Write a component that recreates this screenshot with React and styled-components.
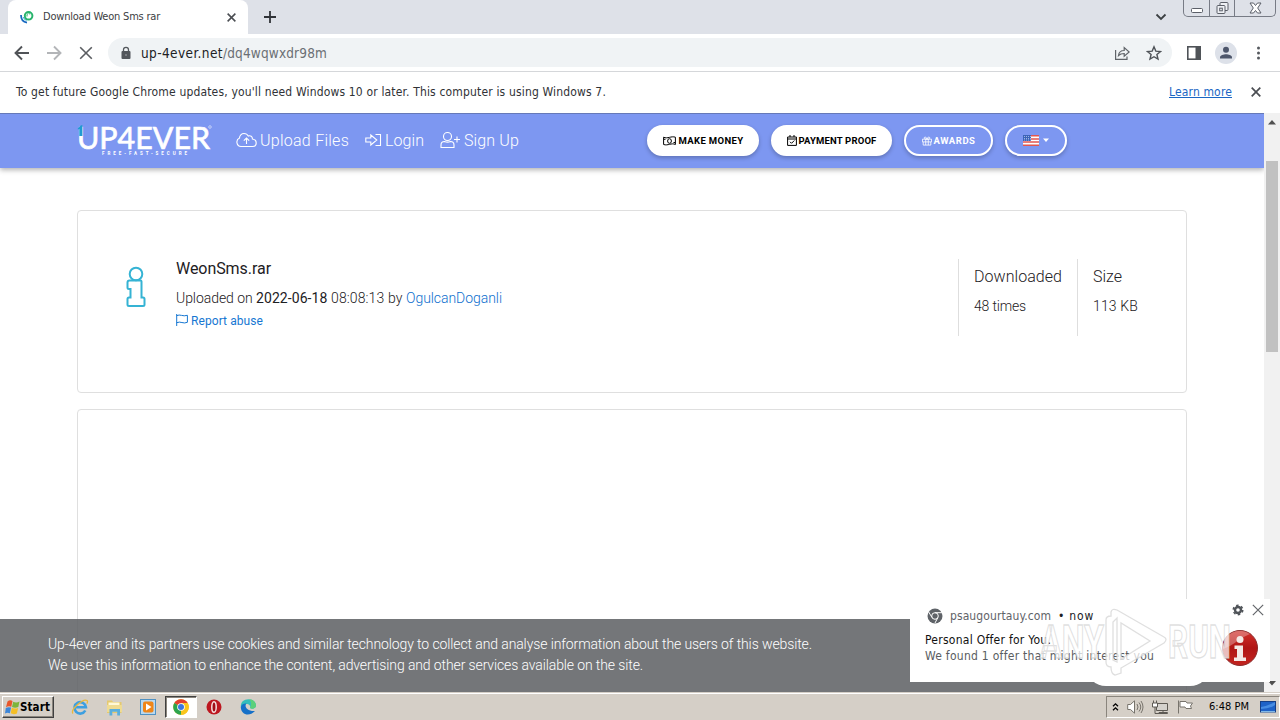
import React, { useLayoutEffect, useRef, useState } from "react";
import styled, { createGlobalStyle } from "styled-components";

const ui = `"DejaVu Sans Condensed", "DejaVu Sans", "Noto Sans", sans-serif`;
const web = `Roboto, "Liberation Sans", sans-serif`;

const Global = createGlobalStyle`
  * { box-sizing: border-box; }
  body { margin: 0; overflow: hidden; background: #fff; }
`;

const Screen = styled.div`
  position: relative;
  width: 1280px;
  height: 720px;
  display: flex;
  flex-direction: column;
  overflow: hidden;
  font-family: ${ui};
  svg { display: block; flex: none; }
`;

const Label = styled.span`
  display: block;
  flex: none;
  white-space: nowrap;
  width: ${(p) => p.$w}px;
  font-family: ${(p) => (p.$web ? web : ui)};
  font-size: ${(p) => p.$size || 12}px;
  font-weight: ${(p) => p.$weight || 400};
  line-height: ${(p) => p.$lh || 16}px;
  color: ${(p) => p.$color || "inherit"};
  text-decoration: ${(p) => (p.$underline ? "underline" : "none")};
`;

// A label whose tracking is adjusted so that the text fills its width.
function Fit({ children, ...rest }) {
  const ref = useRef(null);
  const [spacing, setSpacing] = useState(0);
  useLayoutEffect(() => {
    const el = ref.current;
    const natural = el.getBoundingClientRect().width;
    setSpacing((rest.$w - natural) / el.textContent.length);
  }, []);
  return (
    <Label {...rest}>
      <span ref={ref} style={{ letterSpacing: spacing }}>{children}</span>
    </Label>
  );
}

/* ---------- browser frame ---------- */
const TabStrip = styled.div`
  height: 34px;
  flex: none;
  display: flex;
  background: #dee1e8;
`;
const Tab = styled.div`
  width: 240px;
  margin-left: 8px;
  padding: 0 12px 0 12px;
  display: flex;
  align-items: center;
  background: #fff;
  border-radius: 8px 8px 0 0;
  color: #3c4043;
`;
const TabTitle = styled.div`
  flex: 1;
  padding-left: 9px;
`;
const NewTab = styled.div`
  padding: 11px 0 0 16px;
  flex: 1;
`;
const TabSearch = styled.div`
  padding: 13px 16px 0 0;
`;
const WindowButtons = styled.div`
  display: flex;
  width: 93px;
  height: 17px;
  margin-right: 4px;
  border: 1px solid #777b85;
  border-top: 0;
  border-radius: 0 0 5px 5px;
`;
const WindowButton = styled.div`
  width: ${(p) => p.$w}px;
  display: flex;
  align-items: center;
  justify-content: center;
  border-left: ${(p) => (p.$first ? 0 : "1px solid #777b85")};
`;
const Toolbar = styled.div`
  height: 38px;
  flex: none;
  display: flex;
  align-items: center;
  background: #fff;
  border-bottom: 1px solid #d5d7da;
  padding: 0 9px 0 14px;
`;
const NavButtons = styled.div`
  display: flex;
  gap: 16px;
  width: 94px;
`;
const Omnibox = styled.div`
  width: 1064px;
  flex: none;
  height: 29px;
  display: flex;
  align-items: center;
  border-radius: 15px;
  background: #f0f3f5;
  padding: 0 10px 0 12px;
`;
const Address = styled.div`
  display: flex;
  flex: 1;
  padding-left: 9px;
`;
const OmniActions = styled.div`
  display: flex;
  gap: 16px;
`;
const ToolbarActions = styled.div`
  display: flex;
  align-items: center;
  gap: 10px;
  margin-left: 15px;
`;
const AvatarSlot = styled.div`
  padding-left: 4px;
`;
const InfoBar = styled.div`
  height: 41px;
  flex: none;
  display: flex;
  align-items: center;
  justify-content: space-between;
  padding: 0 19px 2px 16px;
  background: #fff;
  color: #303236;
`;
const InfoActions = styled.div`
  display: flex;
  align-items: center;
  gap: 19px;
`;

/* ---------- page ---------- */
const Viewport = styled.div`
  position: relative;
  height: 579px;
  flex: none;
  display: flex;
  overflow: hidden;
`;
const Page = styled.div`
  position: relative;
  width: 1264px;
  height: 579px;
  overflow: hidden;
  background: #fff;
`;
const Header = styled.div`
  height: 55px;
  display: flex;
  padding-left: 77px;
  background: #7d97f1;
  box-shadow: inset 0 1px 0 #6679b8, 0 2px 5px rgba(0, 0, 0, 0.3);
`;
const Brand = styled.div`
  width: 159px;
  padding-top: 7px;
`;
const NavLinks = styled.div`
  width: 411px;
  display: flex;
  gap: 16px;
  padding-top: 18px;
  color: #fff;
`;
const NavLink = styled.div`
  display: flex;
  gap: ${(p) => p.$gap || 3}px;
`;
const Pills = styled.div`
  display: flex;
  gap: 12px;
  padding-top: 12px;
`;
const Pill = styled.div`
  width: ${(p) => p.$w}px;
  height: 31px;
  display: flex;
  align-items: center;
  justify-content: center;
  gap: ${(p) => p.$gap || 2}px;
  border-radius: 16px;
  border: 2px solid #fff;
  background: ${(p) => (p.$outline ? "transparent" : "#fff")};
  color: ${(p) => (p.$outline ? "#fff" : "#000")};
  box-shadow: 0 2px 4px rgba(0, 0, 0, 0.24);
`;
const Content = styled.main`
  width: 1110px;
  margin: 42px auto 0;
  display: flex;
  flex-direction: column;
  gap: 16px;
`;
const Card = styled.section`
  height: ${(p) => p.$h}px;
  display: flex;
  align-items: flex-start;
  padding: 48px 32px 0 48px;
  border: 1px solid #dfdfdf;
  border-radius: 4px;
  color: #1d2023;
`;
const FileIcon = styled.div`
  width: 50px;
  padding-top: 7px;
`;
const FileInfo = styled.div`
  flex: 1;
`;
const FileName = styled.div`
  padding-bottom: 11px;
`;
const FileLine = styled.div`
  display: flex;
  padding-bottom: 6px;
`;
const Report = styled.div`
  display: flex;
  gap: 3px;
  color: #1677d2;
`;
const Stat = styled.div`
  height: 77px;
  width: ${(p) => p.$w}px;
  padding: 7px 0 0 15px;
  border-left: 1px solid #dedede;
`;
const StatValue = styled.div`
  padding-top: 7px;
`;
const CookieBar = styled.div`
  position: absolute;
  left: 0;
  right: 0;
  bottom: 0;
  height: 73px;
  padding: 15px 48px;
  background: rgba(93, 96, 99, 0.86);
  color: #fff;
`;
const CookieButton = styled.div`
  position: absolute;
  left: 1086px;
  bottom: 6px;
  width: 124px;
  height: 40px;
  border-radius: 20px;
  background: #fff;
`;
const Scrollbar = styled.div`
  width: 16px;
  display: flex;
  flex-direction: column;
  align-items: center;
  background: #f1f1f1;
  padding: 7px 0 6px;
`;
const Thumb = styled.div`
  width: 12px;
  height: 191px;
  margin: 36px 0 auto;
  background: #c1c1c1;
`;

/* ---------- notification ---------- */
const Toast = styled.div`
  position: absolute;
  left: 910px;
  top: 599px;
  width: 360px;
  height: 83px;
  background: #fff;
  display: flex;
`;
const ToastText = styled.div`
  width: 308px;
  padding: 9px 0 0 15px;
`;
const ToastSource = styled.div`
  display: flex;
  align-items: center;
  gap: 7px;
  padding: 0 0 9px 2px;
`;
const ToastSide = styled.div`
  padding-top: 5px;
`;
const ToastTools = styled.div`
  display: flex;
  gap: 8px;
  padding: 0 0 13px 14px;
`;
const ToastIcon = styled.div`
  margin-left: 3px;
`;
const Watermark = styled.svg`
  position: absolute;
  left: 1036px;
  top: 604px;
`;

/* ---------- taskbar ---------- */
const Taskbar = styled.div`
  height: 28px;
  flex: none;
  display: flex;
  align-items: flex-start;
  background: #d5cfc7;
  border-top: 1px solid #d5cfc7;
  box-shadow: inset 0 1px 0 #fff;
  padding: 3px 0 0 2px;
`;
const StartButton = styled.div`
  width: 52px;
  height: 22px;
  display: flex;
  align-items: center;
  padding-left: 2px;
  color: #000;
  border: 1px solid;
  border-color: #fff #404040 #404040 #fff;
  box-shadow: inset -1px -1px 0 #8a857d;
`;
const QuickLaunch = styled.div`
  display: flex;
  flex: 1;
  padding-left: 9px;
`;
const TaskItem = styled.div`
  width: ${(p) => (p.$active ? 32 : 34)}px;
  height: 22px;
  display: flex;
  align-items: center;
  justify-content: center;
  background: ${(p) => (p.$active ? "#fff" : "transparent")};
  border: ${(p) => (p.$active ? "1px solid" : "0")};
  border-color: #404040 #fff #fff #404040;
  box-shadow: ${(p) => (p.$active ? "inset 1px 1px 0 #8a857d" : "none")};
`;
const Tray = styled.div`
  width: 174px;
  height: 22px;
  display: flex;
  align-items: center;
  padding-left: 5px;
  border: 1px solid;
  border-color: #8a857d #fff #fff #8a857d;
  color: #000;
`;
const TrayIcons = styled.div`
  display: flex;
  align-items: center;
  gap: 8px;
  width: 97px;
`;
const Clock = styled.div`
  width: 51px;
`;

/* ---------- drawings ---------- */
const Cross = ({ size = 10, color = "#4a4d52", w = 1.6 }) => (
  <svg width={size} height={size} viewBox="0 0 10 10" stroke={color} strokeWidth={w}>
    <path d="M.7 .7 9.3 9.3M9.3 .7 .7 9.3" />
  </svg>
);
const Favicon = () => (
  <svg width="14" height="14" viewBox="0 0 14 14" fill="none">
    <path d="M1 5c0 4 2 7 6 7.600" stroke="#1769c0" strokeWidth="1.800" />
    <path d="M3.500 7c.3 2 1.500 3 3 3.500" stroke="#3aa7d8" strokeWidth="1.200" />
    <circle cx="8.600" cy="5.800" r="3.800" stroke="#27b46c" strokeWidth="2" />
    <path d="M7 6.500V4.500l1.600-1.500 1.600 1.500" stroke="#27b46c" strokeWidth="1" />
  </svg>
);
const Arrow = ({ color, flip }) => (
  <svg width="16" height="16" viewBox="0 0 16 16" fill="none" stroke={color} strokeWidth="1.900">
    <path d={flip ? "M1 8h13M8 1.500 14.500 8 8 14.500" : "M15 8H2M8 1.500 1.500 8 8 14.500"} />
  </svg>
);
const Lock = () => (
  <svg width="12" height="14" viewBox="0 0 12 14" fill="none">
    <rect x="1.500" y="5" width="9" height="8" rx="1" fill="#53575c" />
    <path d="M3.500 5.500V3.800a2.500 2.500 0 0 1 5 0v1.700" stroke="#53575c" strokeWidth="1.300" />
    <circle cx="6" cy="9" r=".9" fill="#8e9195" />
  </svg>
);
const Share = () => (
  <svg width="16" height="16" viewBox="0 0 16 16" fill="none" stroke="#5f6368" strokeWidth="1.200">
    <path d="M1.600 5v9.400H13v-3M4.500 10.500c.4-3.300 2.300-5 5.700-5V2.600l5 4.400-5 4.200V8.500c-2.700 0-4.300.6-5.700 2Z" />
  </svg>
);
const Star = () => (
  <svg width="16" height="16" viewBox="0 0 16 16" fill="none" stroke="#4f5358" strokeWidth="1.400">
    <path d="m8 1.800 1.800 4.300 4.700.4-3.600 3 1.100 4.600L8 11.700l-4 2.400 1.100-4.600-3.600-3 4.700-.4Z" />
  </svg>
);
const SidePanel = () => (
  <svg width="14" height="14" viewBox="0 0 14 14">
    <rect x=".8" y=".8" width="12.400" height="12.400" fill="#fff" stroke="#4f5358" strokeWidth="1.600" />
    <path d="M8.500 0H14v14H8.500Z" fill="#4f5358" />
  </svg>
);
const Avatar = () => (
  <svg width="22" height="22" viewBox="0 0 22 22">
    <circle cx="11" cy="11" r="11" fill="#dde1e9" />
    <circle cx="11" cy="7.800" r="3" fill="#4d566b" />
    <path d="M5 16.500v-1.300c0-2 3.600-3 6-3s6 1 6 3v1.300Z" fill="#4d566b" />
  </svg>
);
const Dots = () => (
  <svg width="22" height="14" viewBox="0 0 22 14" fill="#55595e">
    <circle cx="11.500" cy="2" r="1.500" /><circle cx="11.500" cy="7" r="1.500" /><circle cx="11.500" cy="12" r="1.500" />
  </svg>
);
const Logo = () => (
  <svg width="136" height="37" viewBox="0 0 136 37">
    <text x="0" y="29" fill="#fff" stroke="#fff" strokeWidth=".7" fontFamily="Lato, sans-serif" fontSize="31.500" textLength="133" lengthAdjust="spacingAndGlyphs">UP4EVER</text>
    <path d="M.8 8.500 4 5.200H5.400V16H2.300V9L.8 9.600Z" fill="#209bd1" />
    <circle cx="133" cy="7" r="1.300" fill="none" stroke="#fff" strokeWidth=".5" />
    <text x="25" y="34.500" fill="#fff" fontFamily="Roboto, sans-serif" fontWeight="700" fontSize="4.500" textLength="85">FREE-FAST-SECURE</text>
  </svg>
);
const Cloud = () => (
  <svg width="21" height="18" viewBox="0 0 21 18" fill="none" stroke="#fff" strokeWidth="1.100">
    <path d="M5 15.500a4.400 4.400 0 0 1-1.500-8.400C3.500 4.400 5.500 2.500 8 2.500c2 0 3.500 1 4.300 2.600 2-1 4.300.3 4.100 2.900 5.200.8 4.900 7.500.2 7.500ZM10.500 13V7M7.800 9.700 10.500 7l2.700 2.700" />
  </svg>
);
const LoginIcon = () => (
  <svg width="17" height="18" viewBox="0 0 17 18" fill="none" stroke="#fff" strokeWidth="1.100">
    <path d="M10.500 3.500h5v11h-5M.8 7v4h5v3l6-5-6-5v3Z" />
  </svg>
);
const UserAdd = () => (
  <svg width="21" height="18" viewBox="0 0 21 18" fill="none" stroke="#fff" strokeWidth="1.100">
    <circle cx="7.500" cy="5.500" r="4" />
    <path d="M1 16.500V14c0-2.200 1.500-3.500 3.500-3.500 2 .8 4 .8 6 0 2 0 3.500 1.300 3.500 3.500v2.500ZM14 8.500h6M17 5.500v6" />
  </svg>
);
const Money = () => (
  <svg width="13" height="10" viewBox="0 0 13 10" fill="none" stroke="#000">
    <path d="M.6 1.200c4 2 7.500-1.500 11.800 0v7.300c-4-2-7.500 1.500-11.800 0Z" /><ellipse cx="6.500" cy="5" rx="1.900" ry="2.300" /><path d="M1 3.300h1.500M10.500 6.500H12" />
  </svg>
);
const Calendar = () => (
  <svg width="10" height="11" viewBox="0 0 10 11" fill="none" stroke="#000">
    <path d="M.6 2h8.800v8.400H.6ZM.6 4h8.800M3 0v2M7 0v2M3 6.800l1.500 1.500L7.300 5.500" />
  </svg>
);
const Gift = () => (
  <svg width="10" height="10" viewBox="0 0 11 10" fill="none" stroke="#fff" strokeWidth=".9">
    <path d="M.5 3h10v3H.5ZM1.300 6v3.500h8.400V6M4.100 3v6.500M6.900 3v6.500M5.500 3C3 3 2 2.200 2.500 1.200 3.500 0 5 .8 5.500 3 6 .8 7.500 0 8.500 1.200 9 2.200 8 3 5.500 3Z" />
  </svg>
);
const UsFlag = () => (
  <svg width="16" height="11" viewBox="0 0 16 11">
    <path d="M0 0h16v11H0Z" fill="#fff" />
    <path d="M0 .8h16M0 3.900h16M0 7h16M0 10.200h16" stroke="#e2564f" strokeWidth="1.500" />
    <path d="M0 0h8v6H0Z" fill="#3c64b8" />
    <path d="M1 1.500h7M1 3.500h7M1 5h7" stroke="#c9d6f2" strokeWidth=".7" strokeDasharray="1 1" />
  </svg>
);
const InfoGlyph = () => (
  <svg width="20" height="42" viewBox="0 0 20 42" fill="none" stroke="#35b3d4" strokeWidth="2">
    <circle cx="10" cy="8" r="6.300" />
    <path d="M3.500 14.500H14.500q1 0 1 1V31.500H17q1.500 0 1.500 1.500v5.500q0 1.500-1.500 1.500H3q-1.500 0-1.500-1.500V33q0-1.500 1.500-1.500h1.500V23H3q-1.500 0-1.500-1.500V16.500q0-2 2-2Z" />
  </svg>
);
const FlagOutline = () => (
  <svg width="12" height="12" viewBox="0 0 12 12" fill="none" stroke="#1677d2">
    <path d="M.7 0v12M.7 1.700c3.300-2 6 1.300 10.700-.4v7c-4 2-7-1.500-10.700.4" />
  </svg>
);
const ChromeGray = () => (
  <svg width="16" height="16" viewBox="0 0 16 16" fill="none">
    <circle cx="8" cy="8" r="7.500" fill="#5f6368" />
    <circle cx="8" cy="8" r="3.300" stroke="#fff" />
    <path d="M8 4.700h7M5 9.500 1.700 4M10.800 9.700 8 15" stroke="#fff" />
  </svg>
);
const Gear = () => (
  <svg width="12" height="12" viewBox="0 0 12 12" fill="none">
    <circle cx="6" cy="6" r="3" stroke="#505459" strokeWidth="2.400" />
    <circle cx="6" cy="6" r="4.700" stroke="#505459" strokeWidth="1.600" strokeDasharray="2.460 2.460" />
  </svg>
);
const RedInfo = () => (
  <svg width="38" height="38" viewBox="0 0 38 38">
    <defs>
      <linearGradient id="red" x2="0" y2="1"><stop stopColor="#d3302b" /><stop offset=".5" stopColor="#b01414" /><stop offset="1" stopColor="#c3241f" /></linearGradient>
    </defs>
    <circle cx="19" cy="19" r="17.500" fill="url(#red)" stroke="#8b2a2a" />
    <path d="M2 20A17 17 0 0 1 29 5C18 9 14 16 2 20Z" fill="#fff" opacity=".3" />
    <circle cx="19" cy="10.500" r="3.500" fill="#f4e9e6" />
    <path d="M13.500 16.500h8.500v12h3v3.500H13v-3.500h3V20h-2.500Z" fill="#f4e9e6" />
  </svg>
);
const WinFlag = () => (
  <svg width="15" height="15" viewBox="0 0 15 15">
    <path d="M2.500 1.500q2.500-2 5-.5L6.300 6.800q-2.800-1.200-5.300.5Z" fill="#e8562a" />
    <path d="M8.200 1.700q3 1.600 6.300-.2L13.300 7q-3.300 1.500-6.300-.1Z" fill="#7db43a" />
    <path d="M.8 8q2.500-1.400 5.300-.4L4.900 13.200q-2.700-1-4.900.2Z" fill="#3d86d8" />
    <path d="M6.800 7.800q3 1.500 6.300.2l-1.200 5.400q-3.200 1.500-6.200-.1Z" fill="#f5bf26" />
  </svg>
);
const IeIcon = () => (
  <svg width="18" height="18" viewBox="0 0 18 18" fill="none">
    <path d="M14.300 12.500a5.700 5.700 0 1 1 .6-3.300H5" stroke="#3d9fe0" strokeWidth="2.600" />
    <path d="M2 15.500C-1 12 12 0 16 2.500c.7.600.5 2-.2 3.200" stroke="#e9b83c" strokeWidth="1.300" />
  </svg>
);
const FolderIcon = () => (
  <svg width="17" height="17" viewBox="0 0 17 17">
    <path d="M1 1.500h5l1 1.500h8.500V14H1Z" fill="#e5c96f" /><path d="M2.500 3.500h11v3H2.500Z" fill="#fff8d8" />
    <path d="M1 6h15v7H1Z" fill="#efdb92" /><path d="M3.500 16.500V10h10.500v6.500h-2.800v-3.700H6.300v3.700Z" fill="#5aaede" />
  </svg>
);
const MediaIcon = () => (
  <svg width="16" height="16" viewBox="0 0 16 16">
    <rect x=".5" y=".5" width="15" height="15" fill="#b9d9f0" stroke="#4f91c2" />
    <rect x="3" y="2.500" width="10.500" height="11" rx="2" fill="#ef8619" />
    <path d="M6 4.500 11.500 8 6 11.500Z" fill="#fff" />
  </svg>
);
const ChromeIcon = () => (
  <svg width="16" height="16" viewBox="0 0 16 16">
    <circle cx="8" cy="8" r="7.800" fill="#f9c51c" />
    <path d="M8 8 1.250 4.100A7.800 7.800 0 0 1 14.750 4.100Z" fill="#e2402f" />
    <path d="M8 8 1.250 4.100A7.800 7.800 0 0 0 8 15.800l3.300-5.600Z" fill="#2da44e" />
    <path d="M8 8V4.100h6.800A7.800 7.800 0 0 1 8 15.800Z" fill="#f9c51c" />
    <circle cx="8" cy="8" r="3.800" fill="#fff" /><circle cx="8" cy="8" r="3" fill="#3b77e0" />
  </svg>
);
const OperaIcon = () => (
  <svg width="16" height="16" viewBox="0 0 16 16">
    <circle cx="8" cy="8" r="7.500" fill="#bd1720" />
    <ellipse cx="8" cy="8" rx="2.200" ry="5.300" fill="#a00d16" stroke="#f6e2e2" strokeWidth="1.500" />
  </svg>
);
const EdgeIcon = () => (
  <svg width="17" height="16" viewBox="0 0 17 16">
    <path d="M1 9C0 3 4 .3 8.500.3c5 0 7.500 3.500 7.500 6.200 0 3-4 4-6 2.500C11 7 9 5 6.500 5 4 5 1.500 6.500 1 9Z" fill="#35bdbb" />
    <path d="M9 .3c4.500 0 7 3.500 7 6.200 0 3-4 4-6 2.500C12 5 11 2 9 .3Z" fill="#5bd07a" />
    <path d="M.8 8C1.500 5 4.500 4 6.500 4.500 4 7 6.500 12.500 15 12 9 18.500 1 15.500.8 8Z" fill="#1670c8" />
  </svg>
);
const Chevrons = () => (
  <svg width="7" height="10" viewBox="0 0 7 10" fill="none" stroke="#000" strokeWidth="1.300">
    <path d="M1 4.300 3.500 1.800 6 4.300M1 8.300 3.500 5.800 6 8.300" />
  </svg>
);
const Speaker = () => (
  <svg width="17" height="14" viewBox="0 0 17 14" fill="#fff" stroke="#77736c">
    <path d="M.7 4.500h2.800L7.500.8v12.400L3.500 9.500H.7Z" /><path d="M10 4q2 3 0 6M12 2.500q3.500 4.500 0 9M14 1q4 6 0 12" fill="none" />
  </svg>
);
const Network = () => (
  <svg width="17" height="15" viewBox="0 0 17 15" stroke="#5e5a54">
    <path d="M4.500 3.500h11v7h-11ZM7 13.500h8.500v-1H7Z" fill="#d5d2cd" /><path d="M.5 3h5v4h-5Z" fill="#fff" /><path d="M1.500 3V.5M4.500 3V.5M3 7v6.500h4M11 10.500v2" fill="none" />
  </svg>
);
const TrayFlag = () => (
  <svg width="17" height="14" viewBox="0 0 17 14" fill="#fff" stroke="#77736c">
    <path d="M1.500.5v13M3 1.500h6l1 1.500h5.500l-2 3 1 2.500H9L8 7H3Z" />
  </svg>
);
const Desktop = () => (
  <svg width="16" height="12" viewBox="0 0 16 12">
    <rect x=".5" y=".5" width="15" height="10.500" fill="#1e62c7" stroke="#163f85" />
    <path d="M1 6q7-1 14-5v3q-5 4-14 4Z" fill="#58a0ee" opacity=".7" /><path d="M1 10.700h14" stroke="#9ad0f5" />
  </svg>
);
const Triangle = ({ down }) => (
  <svg width="8" height="5" viewBox="0 0 8 5"><path d={down ? "M0 0h8L4 4.500Z" : "M0 4.500h8L4 0Z"} fill="#505050" /></svg>
);

export default function App() {
  return (
    <Screen>
      <Global />
      <TabStrip>
        <Tab>
          <Favicon />
          <TabTitle><Fit $w={117} $size={11} $color="#3c4043">Download Weon Sms rar</Fit></TabTitle>
          <Cross size={9} w={1.7} />
        </Tab>
        <NewTab>
          <svg width="12" height="12" viewBox="0 0 12 12" stroke="#303338" strokeWidth="1.800"><path d="M6 0v12M0 6h12" /></svg>
        </NewTab>
        <TabSearch>
          <svg width="12" height="8" viewBox="0 0 12 8" fill="none" stroke="#3c4043" strokeWidth="1.800"><path d="M1.500 1.500 6 6l4.500-4.500" /></svg>
        </TabSearch>
        <WindowButtons>
          <WindowButton $w={25} $first>
            <svg width="12" height="16" viewBox="0 0 12 16" fill="#fff" stroke="#5b5f68"><rect x=".5" y="8.500" width="11" height="4" rx="1" /></svg>
          </WindowButton>
          <WindowButton $w={25}>
            <svg width="13" height="14" viewBox="0 0 13 14" fill="#eef0f4" stroke="#5b5f68"><rect x="4" y="1.500" width="8" height="8" rx="1" /><rect x="1" y="4.500" width="8" height="8" rx="1" /><rect x="3.700" y="7.200" width="2.600" height="2.600" /></svg>
          </WindowButton>
          <WindowButton $w={41}>
            <svg width="13" height="12" viewBox="0 0 13 12" fill="#fff" stroke="#5b5f68"><path d="M1 1h3.500l2 2.500 2-2.500H12L8.700 6 12 11H8.500l-2-2.500-2 2.500H1l3.300-5Z" /></svg>
          </WindowButton>
        </WindowButtons>
      </TabStrip>
      <Toolbar>
        <NavButtons>
          <Arrow color="#505357" />
          <Arrow color="#b3b5b8" flip />
          <svg width="16" height="16" viewBox="0 0 16 16" stroke="#5a5d61" strokeWidth="1.600"><path d="m2.200 2.200 11.600 11.600M13.800 2.200 2.200 13.800" /></svg>
        </NavButtons>
        <Omnibox>
          <Lock />
          <Address>
            <Fit $w={82} $size={13.5} $lh={18} $color="#202124">up-4ever.net</Fit>
            <Fit $w={104} $size={13.5} $lh={18} $color="#6b6f74">/dq4wqwxdr98m</Fit>
          </Address>
          <OmniActions><Share /><Star /></OmniActions>
        </Omnibox>
        <ToolbarActions>
          <SidePanel /><AvatarSlot><Avatar /></AvatarSlot><Dots />
        </ToolbarActions>
      </Toolbar>
      <InfoBar>
        <Fit $w={590} $size={12}>To get future Google Chrome updates, you'll need Windows 10 or later. This computer is using Windows 7.</Fit>
        <InfoActions>
          <Fit $w={63} $size={12} $color="#1a66c4" $underline>Learn more</Fit>
          <Cross size={10} w={1.7} />
        </InfoActions>
      </InfoBar>

      <Viewport>
        <Page>
          <Header>
            <Brand><Logo /></Brand>
            <NavLinks>
              <NavLink><Cloud /><Fit $web $weight={300} $w={89} $size={16} $lh={19}>Upload Files</Fit></NavLink>
              <NavLink><LoginIcon /><Fit $web $weight={300} $w={39} $size={16} $lh={19}>Login</Fit></NavLink>
              <NavLink><UserAdd /><Fit $web $weight={300} $w={55} $size={16} $lh={19}>Sign Up</Fit></NavLink>
            </NavLinks>
            <Pills>
              <Pill $w={112} $gap={3}><Money /><Fit $web $weight={700} $w={65} $size={9.5}>MAKE MONEY</Fit></Pill>
              <Pill $w={121}><Calendar /><Fit $web $weight={700} $w={78} $size={9.5}>PAYMENT PROOF</Fit></Pill>
              <Pill $w={89} $outline><Gift /><Fit $web $weight={700} $w={42} $size={9.5}>AWARDS</Fit></Pill>
              <Pill $w={62} $outline $gap={4}>
                <UsFlag />
                <svg width="6" height="6" viewBox="0 0 6 6"><path d="M0 .500h6L3 4Z" fill="#fff" /></svg>
              </Pill>
            </Pills>
          </Header>
          <Content>
            <Card $h={183}>
              <FileIcon><InfoGlyph /></FileIcon>
              <FileInfo>
                <FileName><Fit $web $w={95} $size={16} $lh={19}>WeonSms.rar</Fit></FileName>
                <FileLine>
                  <Fit $web $weight={300} $w={80} $size={14} $lh={19}>Uploaded on&nbsp;</Fit>
                  <Fit $web $w={75} $size={14} $lh={19}>2022-06-18&nbsp;</Fit>
                  <Fit $web $weight={300} $w={75} $size={14} $lh={19}>08:08:13 by&nbsp;</Fit>
                  <Fit $web $weight={300} $w={96} $size={14} $lh={19} $color="#0d6fce">OgulcanDoganli</Fit>
                </FileLine>
                <Report><FlagOutline /><Fit $web $w={72} $size={12} $lh={14}>Report abuse</Fit></Report>
              </FileInfo>
              <Stat $w={119}>
                <Fit $web $weight={300} $w={88} $size={16} $lh={22}>Downloaded</Fit>
                <StatValue><Fit $web $weight={300} $w={52} $size={14} $lh={22}>48 times</Fit></StatValue>
              </Stat>
              <Stat $w={77}>
                <Fit $web $weight={300} $w={29} $size={16} $lh={22}>Size</Fit>
                <StatValue><Fit $web $weight={300} $w={45} $size={14} $lh={22}>113 KB</Fit></StatValue>
              </Stat>
            </Card>
            <Card $h={400} />
          </Content>
          <CookieBar>
            <Fit $web $weight={300} $w={764} $size={14} $lh={21}>Up-4ever and its partners use cookies and similar technology to collect and analyse information about the users of this website.</Fit>
            <Fit $web $weight={300} $w={595} $size={14} $lh={21}>We use this information to enhance the content, advertising and other services available on the site.</Fit>
          </CookieBar>
          <CookieButton />
        </Page>
        <Scrollbar><Triangle /><Thumb /><Triangle down /></Scrollbar>
      </Viewport>

      <Taskbar>
        <StartButton><WinFlag /><Fit $w={30} $size={11.5} $weight={700}>Start</Fit></StartButton>
        <QuickLaunch>
          <TaskItem><IeIcon /></TaskItem>
          <TaskItem><FolderIcon /></TaskItem>
          <TaskItem><MediaIcon /></TaskItem>
          <TaskItem $active><ChromeIcon /></TaskItem>
          <TaskItem><OperaIcon /></TaskItem>
          <TaskItem><EdgeIcon /></TaskItem>
        </QuickLaunch>
        <Tray>
          <TrayIcons><Chevrons /><Speaker /><Network /><TrayFlag /></TrayIcons>
          <Clock><Fit $w={40} $size={11}>6:48 PM</Fit></Clock>
          <Desktop />
        </Tray>
      </Taskbar>

      <Toast>
        <ToastText>
          <ToastSource>
            <ChromeGray />
            <Fit $w={101} $size={12} $color="#5f6368">psaugourtauy.com</Fit>
            <Fit $w={36} $size={12} $color="#202124">• now</Fit>
          </ToastSource>
          <Fit $w={126} $size={12} $lh={15} $color="#111">Personal Offer for You.</Fit>
          <Fit $w={229} $size={12} $lh={17} $color="#5a5d61">We found 1 offer that might interest you</Fit>
        </ToastText>
        <ToastSide>
          <ToastTools><Gear /><Cross size={12} color="#64676b" w={1} /></ToastTools>
          <ToastIcon><RedInfo /></ToastIcon>
        </ToastSide>
      </Toast>

      <Watermark width="200" height="72" viewBox="0 0 200 72">
        <g fill="#fff" fillOpacity=".72" stroke="#d2d2d2" strokeOpacity=".7" strokeWidth="1.300" fontFamily="Roboto, sans-serif" fontWeight="700">
          <text x="4" y="54" fontSize="46" textLength="64" lengthAdjust="spacingAndGlyphs">ANY</text>
          <path d="M70 16q0-4 5-4V8q1-4 6-2l47 27q4 2 0 6L85 64v5l-6 2q-4-1-4-8-5 0-5-5ZM85 19v36l29-18ZM77 18v38l4 2V14Z" fillRule="evenodd" />
          <text x="132" y="54" fontSize="46" textLength="63" lengthAdjust="spacingAndGlyphs">RUN</text>
        </g>
      </Watermark>
    </Screen>
  );
}
